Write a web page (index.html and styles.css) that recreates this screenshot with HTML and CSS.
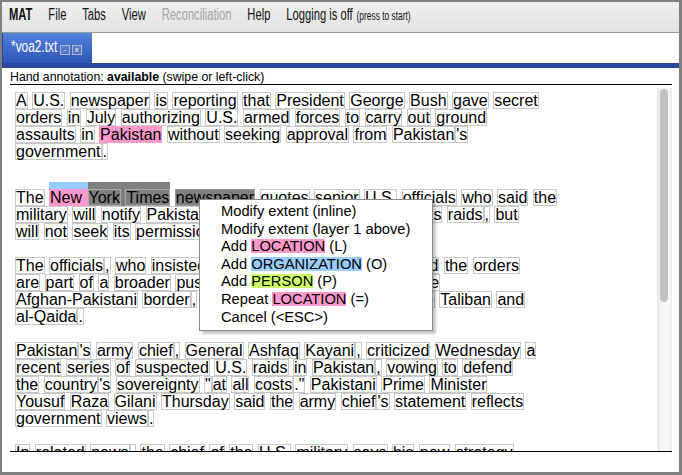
FILE: index.html
```html
<!DOCTYPE html>
<html>
<head>
<meta charset="utf-8">
<title>MAT</title>
<link rel="stylesheet" href="styles.css">
</head>
<body>
<div class="window">
  <div class="menubar">
    <div class="menu-inner">
      <span class="mi brand">MAT</span>
      <span class="mi">File</span>
      <span class="mi">Tabs</span>
      <span class="mi">View</span>
      <span class="mi disabled">Reconciliation</span>
      <span class="mi">Help</span>
      <span class="mi">Logging is off <small>(press to start)</small></span>
    </div>
  </div>
  <div class="tabbar">
    <div class="tab"><span class="tab-title">*voa2.txt</span><span class="tbtn">-</span><span class="tbtn">x</span></div>
  </div>
  <div class="tabline"></div>
  <div class="pane">
    <div class="status">Hand annotation: <b>available</b> (swipe or left-click)</div>
    <div class="doc">
      <div class="text">
        <div class="line"><span class="t">A</span> <span class="t">U.S.</span> <span class="t">newspaper</span> <span class="t">is</span> <span class="t">reporting</span> <span class="t">that</span> <span class="t">President</span> <span class="t">George</span> <span class="t">Bush</span> <span class="t">gave</span> <span class="t">secret</span></div>
        <div class="line"><span class="t">orders</span> <span class="t">in</span> <span class="t">July</span> <span class="t">authorizing</span> <span class="t">U.S.</span> <span class="t">armed</span> <span class="t">forces</span> <span class="t">to</span> <span class="t">carry</span> <span class="t">out</span> <span class="t">ground</span></div>
        <div class="line"><span class="t">assaults</span> <span class="t">in</span> <span class="t loc">Pakistan</span> <span class="t">without</span> <span class="t">seeking</span> <span class="t">approval</span> <span class="t">from</span> <span class="t">Pakistan</span><span class="t">'s</span></div>
        <div class="line"><span class="t">government</span><span class="t">.</span></div>
        <div class="blank"></div>
        <div class="line tall"><span class="t">The</span> <span class="seg seg-new"><span class="t bare">New</span>&nbsp;</span><span class="seg seg-sel"><span class="t insel">York</span> <span class="t insel">Times</span></span> <span class="t sel">newspaper</span> <span class="t">quotes</span> <span class="t">senior</span> <span class="t">U.S.</span> <span class="t">officials</span> <span class="t">who</span> <span class="t">said</span> <span class="t">the</span></div>
        <div class="line"><span class="t">military</span> <span class="t">will</span> <span class="t">notify</span> <span class="t">Pakistani</span> <span class="t">authorities</span> <span class="t">well</span> <span class="t">ahead</span> <span class="t">of</span> <span class="t">all</span> <span class="t">its</span> <span class="t">raids</span><span class="t">,</span> <span class="t">but</span></div>
        <div class="line"><span class="t">will</span> <span class="t">not</span> <span class="t">seek</span> <span class="t">its</span> <span class="t">permission</span><span class="t">.</span></div>
        <div class="blank"></div>
        <div class="line"><span class="t">The</span> <span class="t">officials</span><span class="t">,</span> <span class="t">who</span> <span class="t">insisted</span> <span class="t">on</span> <span class="t">remaining</span> <span class="t">anonymous</span><span class="t">,</span> <span class="t">said</span> <span class="t">the</span> <span class="t">orders</span></div>
        <div class="line"><span class="t">are</span> <span class="t">part</span> <span class="t">of</span> <span class="t">a</span> <span class="t">broader</span> <span class="t">push</span> <span class="t">to</span> <span class="t">pressure</span> <span class="t">militants</span> <span class="t">along</span> <span class="t">the</span></div>
        <div class="line"><span class="t">Afghan-Pakistani</span> <span class="t">border</span><span class="t">,</span> <span class="t">where</span> <span class="t">insurgents</span> <span class="t">allied</span> <span class="t">with</span> <span class="t">the</span> <span class="t">Taliban</span> <span class="t">and</span></div>
        <div class="line"><span class="t">al-Qaida</span><span class="t">.</span></div>
        <div class="blank"></div>
        <div class="line"><span class="t">Pakistan</span><span class="t">'s</span> <span class="t">army</span> <span class="t">chief</span><span class="t">,</span> <span class="t">General</span> <span class="t">Ashfaq</span> <span class="t">Kayani</span><span class="t">,</span> <span class="t">criticized</span> <span class="t">Wednesday</span> <span class="t">a</span></div>
        <div class="line"><span class="t">recent</span> <span class="t">series</span> <span class="t">of</span> <span class="t">suspected</span> <span class="t">U.S.</span> <span class="t">raids</span> <span class="t">in</span> <span class="t">Pakistan</span><span class="t">,</span> <span class="t">vowing</span> <span class="t">to</span> <span class="t">defend</span></div>
        <div class="line"><span class="t">the</span> <span class="t">country</span><span class="t">'s</span> <span class="t">sovereignty</span> <span class="t">"</span><span class="t">at</span> <span class="t">all</span> <span class="t">costs</span><span class="t">."</span> <span class="t">Pakistani</span> <span class="t">Prime</span> <span class="t">Minister</span></div>
        <div class="line"><span class="t">Yousuf</span> <span class="t">Raza</span> <span class="t">Gilani</span> <span class="t">Thursday</span> <span class="t">said</span> <span class="t">the</span> <span class="t">army</span> <span class="t">chief</span><span class="t">'s</span> <span class="t">statement</span> <span class="t">reflects</span></div>
        <div class="line"><span class="t">government</span> <span class="t">views</span><span class="t">.</span></div>
        <div class="blank"></div>
        <div class="line"><span class="t">In</span> <span class="t">related</span> <span class="t">news</span><span class="t">,</span> <span class="t">the</span> <span class="t">chief</span> <span class="t">of</span> <span class="t">the</span> <span class="t">U.S.</span> <span class="t">military</span> <span class="t">says</span> <span class="t">his</span> <span class="t">new</span> <span class="t">strategy</span></div>
      </div>
      <div class="scrollbar"><div class="thumb"></div></div>
      <div class="ctxmenu">
        <div class="ci">Modify extent (inline)</div>
        <div class="ci">Modify extent (layer 1 above)</div>
        <div class="ci">Add <span class="chip c-loc">LOCATION</span> (L)</div>
        <div class="ci">Add <span class="chip c-org">ORGANIZATION</span> (O)</div>
        <div class="ci">Add <span class="chip c-per">PERSON</span> (P)</div>
        <div class="ci">Repeat <span class="chip c-loc">LOCATION</span> (=)</div>
        <div class="ci">Cancel (&lt;ESC&gt;)</div>
      </div>
    </div>
  </div>
</div>
</body>
</html>
```
FILE: styles.css
```css
* { box-sizing: border-box; margin: 0; padding: 0; }

body {
  margin: 0;
  background: #7f7f7f;
  font-family: "Liberation Sans", Arial, sans-serif;
  color: #000;
}

.window {
  width: 682px;
  height: 475px;
  background: #7f7f7f;
  padding: 2px 3px 3px 2px;
  display: flex;
  flex-direction: column;
}

/* ---------- menu bar (condensed Helvetica look) ---------- */
.menubar {
  height: 31px;
  flex: none;
  display: flex;
  align-items: center;
  padding: 0 0 3px 7px;
  background: linear-gradient(#efefef, #e3e3e3);
  border-bottom: 1px solid #9c9c9c;
  overflow: hidden;
}
.menu-inner {
  display: flex;
  align-items: baseline;
  gap: 22.7px;
  transform: scaleX(0.7);
  transform-origin: left center;
  font-size: 16px;
  line-height: 17px;
  color: #111;
  white-space: nowrap;
}
.mi.brand { font-weight: bold; }
.mi.disabled { color: #a3a3a3; }
.mi small { font-size: 12px; margin-left: 1px; }

/* ---------- tabs ---------- */
.tabbar {
  height: 30px;
  flex: none;
  display: flex;
  background: #fff;
}
.tab {
  display: flex;
  align-items: center;
  padding: 0 10px 3px 8px;
  background: linear-gradient(#5281dc, #2f55b7);
  border-left: 1px solid #2a4aa6;
  color: #fff;
}
.tab-title {
  display: inline-block;
  font-size: 16px;
  line-height: 17px;
  transform: scaleX(0.743);
  transform-origin: left center;
  margin-right: -16px;
  white-space: nowrap;
}
.tbtn {
  width: 10px;
  height: 10px;
  margin: 7px 0 0 2.7px;
  border: 1px solid #b4b8c6;
  background: rgba(255, 255, 255, 0.1);
  color: #fff;
  font-size: 8px;
  line-height: 8px;
  text-align: center;
}
.tbtn + .tbtn { margin-left: 1.7px; }

.tabline {
  height: 5px;
  flex: none;
  background: #2b479f;
}

/* ---------- pane ---------- */
.pane {
  flex: 1;
  background: #fff;
  padding: 0 7px 0 8px;
  display: flex;
  flex-direction: column;
}
.status {
  height: 17px;
  padding-top: 2px;
  font-size: 12.3px;
  line-height: 14px;
  border-bottom: 1px solid #000;
  white-space: nowrap;
}

.doc {
  position: relative;
  margin-top: 3px;
  height: 364px;
  display: flex;
  border-bottom: 1px solid #000;
}
.text {
  flex: 1;
  overflow: hidden;
  padding: 4px 0 0 5px;
  font-size: 16px;
}
.line {
  height: 17px;
  line-height: 17px;
  white-space: nowrap;
}
.blank { height: 17px; }

.t {
  display: inline-block;
  vertical-align: top;
  border: 1px solid #c9c9c9;
  line-height: 15px;
}
.t.loc { background: #ff99cc; border-color: #ff99cc; }

.line.tall {
  height: auto;
  padding-top: 5px;
}
.line.tall .t,
.line.tall .seg { vertical-align: bottom; }
.seg {
  display: inline-block;
  padding-top: 7px;
  line-height: 17px;
}
.seg-new { background: linear-gradient(#99ccff 0, #99ccff 7px, #ff99cc 7px); }
.seg-sel { background: #808080; }
.t.bare { border-color: transparent; }
.t.insel { border-color: #a9a9a9; }
.t.sel { background: #808080; border-color: #9a9a9a; }

/* ---------- scrollbar ---------- */
.scrollbar {
  width: 15px;
  flex: none;
  background: linear-gradient(to right, #e3e3e3 0, #f2f2f2 3px, #f8f8f8 11px, #ececec 15px);
}
.thumb {
  margin: 1px 0 0 3px;
  width: 8px;
  height: 213px;
  border-radius: 4px;
  background: #c2c2c2;
}

/* ---------- context menu ---------- */
.ctxmenu {
  position: absolute;
  left: 189px;
  top: 111px;
  width: 234px;
  padding: 3px 0 4px 21px;
  background: #fff;
  border: 1px solid #8a8a8a;
  box-shadow: 3px 3px 2px rgba(0, 0, 0, 0.22);
  font-size: 14.7px;
  line-height: 17.6px;
  white-space: nowrap;
}
.chip {
  display: inline-block;
  line-height: 14px;
}
.c-loc { background: #ff99cc; }
.c-org { background: #99ccff; }
.c-per { background: #ccff66; }
```
